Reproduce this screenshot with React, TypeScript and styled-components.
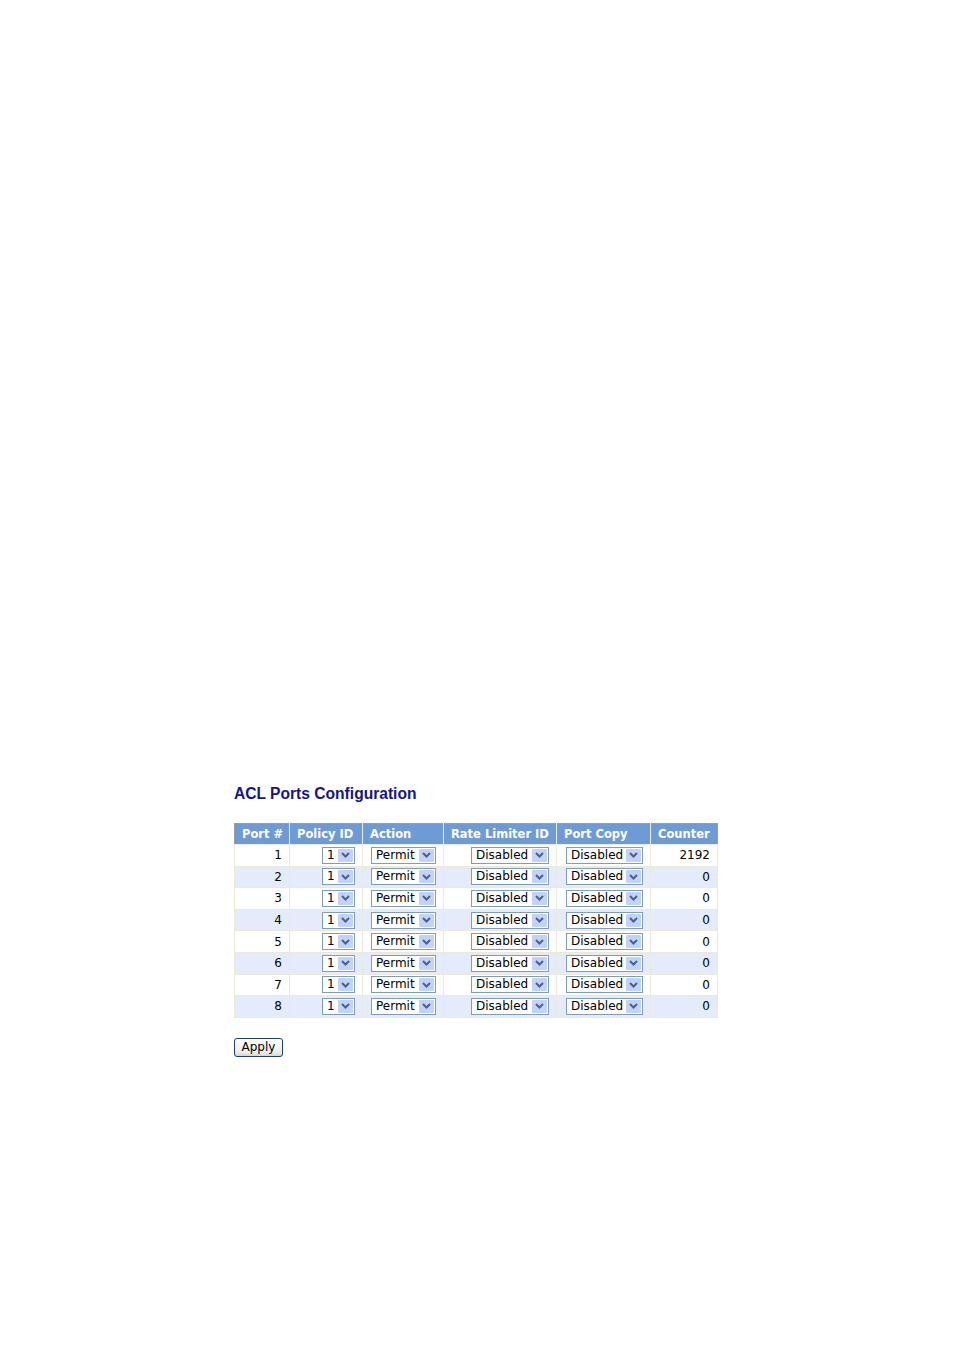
import React from "react";
import styled, { createGlobalStyle } from "styled-components";

const GlobalStyle = createGlobalStyle`
  html, body {
    margin: 0;
    padding: 0;
    background: #ffffff;
  }
`;

const Page = styled.div`
  width: 954px;
  height: 1349px;
  box-sizing: border-box;
  padding: 784px 0 0 234px;
  font-family: "DejaVu Sans", Verdana, sans-serif;
`;

const Title = styled.h1`
  margin: 0;
  font-family: "Liberation Sans", Arial, sans-serif;
  font-size: 15.6px;
  line-height: 19px;
  font-weight: bold;
  color: #14148c;
`;

const Table = styled.table`
  margin-top: 20px;
  width: 484px;
  table-layout: fixed;
  border-collapse: collapse;
  border: 1px solid #9c9c9c;
`;

const Col = styled.col<{ $w: number }>`
  width: ${(p) => p.$w}px;
`;

const HeadRow = styled.tr`
  height: 21px;
`;

const HeadCell = styled.th`
  padding: 0 6px 0 7px;
  background: #6f9bd4;
  color: #ffffff;
  font-size: 11.5px;
  font-weight: bold;
  text-align: left;
  white-space: nowrap;
  overflow: hidden;
  border-left: 1px solid #e6eefa;
  border-bottom: 1px solid #e6eefa;
  &:first-child {
    border-left: none;
  }
`;

const Row = styled.tr<{ $alt: boolean }>`
  height: 21.6px;
  background: ${(p) => (p.$alt ? "#e4ecfb" : "#ffffff")};
`;

const Cell = styled.td`
  padding: 0 7px;
  text-align: right;
  font-size: 12px;
  color: #000000;
  border: 1px solid #ece8da;
  border-top: none;
  white-space: nowrap;
`;

const SelectBox = styled.span<{ $w: number }>`
  display: inline-flex;
  align-items: center;
  vertical-align: middle;
  box-sizing: border-box;
  width: ${(p) => p.$w}px;
  height: 17px;
  border: 1px solid #7f9db9;
  background: #ffffff;
  padding: 1px;
`;

const SelectText = styled.span`
  flex: 1;
  text-align: left;
  padding-left: 3px;
  font-size: 12px;
  line-height: 13px;
  color: #000000;
`;

const ArrowBtn = styled.span`
  display: flex;
  align-items: center;
  justify-content: center;
  width: 15px;
  height: 13px;
  background: #c1d3fb;
  border-radius: 1px;
`;

const ApplyButton = styled.button`
  margin-top: 20px;
  padding: 0 6px;
  height: 19px;
  width: 49px;
  font-family: "DejaVu Sans", Verdana, sans-serif;
  font-size: 12px;
  color: #000000;
  border: 1px solid #1c3e74;
  border-radius: 3px;
  background: linear-gradient(#ffffff, #ecebe4 80%, #d8d6cc);
`;

function FakeSelect({ value, width }: { value: string; width: number }) {
  return (
    <SelectBox $w={width}>
      <SelectText>{value}</SelectText>
      <ArrowBtn>
        <svg width="9" height="6" viewBox="0 0 9 6">
          <path d="M1 1 L4.5 4.5 L8 1" fill="none" stroke="#4d6185" strokeWidth="2" />
        </svg>
      </ArrowBtn>
    </SelectBox>
  );
}

type PortRow = {
  port: number;
  policy: string;
  action: string;
  rate: string;
  copy: string;
  counter: number;
};

const rows: PortRow[] = [1, 2, 3, 4, 5, 6, 7, 8].map((port) => ({
  port,
  policy: "1",
  action: "Permit",
  rate: "Disabled",
  copy: "Disabled",
  counter: port === 1 ? 2192 : 0,
}));

export default function App() {
  return (
    <>
      <GlobalStyle />
      <Page>
        <Title>ACL Ports Configuration</Title>
        <Table>
          <colgroup>
            <Col $w={55} />
            <Col $w={73} />
            <Col $w={81} />
            <Col $w={113} />
            <Col $w={94} />
            <Col $w={67} />
          </colgroup>
          <thead>
            <HeadRow>
              <HeadCell>Port #</HeadCell>
              <HeadCell>Policy ID</HeadCell>
              <HeadCell>Action</HeadCell>
              <HeadCell>Rate Limiter ID</HeadCell>
              <HeadCell>Port Copy</HeadCell>
              <HeadCell>Counter</HeadCell>
            </HeadRow>
          </thead>
          <tbody>
            {rows.map((r, i) => (
              <Row key={r.port} $alt={i % 2 === 1}>
                <Cell>{r.port}</Cell>
                <Cell>
                  <FakeSelect value={r.policy} width={33} />
                </Cell>
                <Cell>
                  <FakeSelect value={r.action} width={65} />
                </Cell>
                <Cell>
                  <FakeSelect value={r.rate} width={78} />
                </Cell>
                <Cell>
                  <FakeSelect value={r.copy} width={77} />
                </Cell>
                <Cell>{r.counter}</Cell>
              </Row>
            ))}
          </tbody>
        </Table>
        <ApplyButton type="button">Apply</ApplyButton>
      </Page>
    </>
  );
}
